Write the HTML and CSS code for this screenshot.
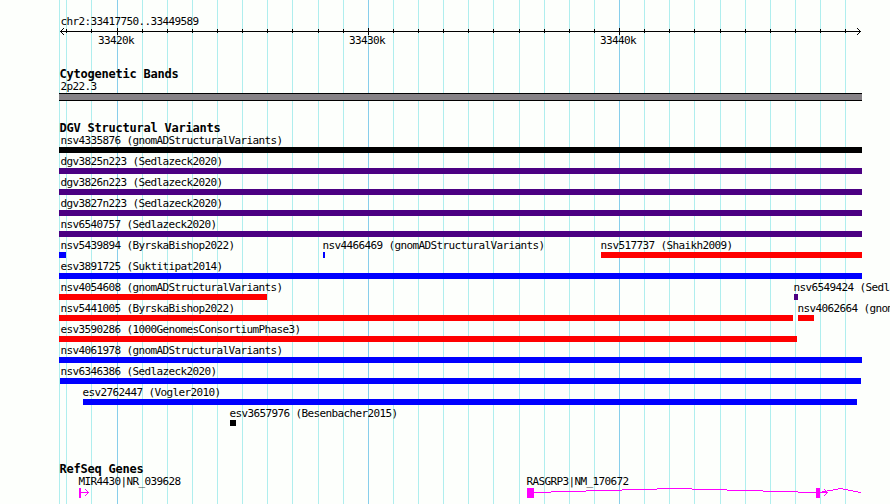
FILE: index.html
```html
<!DOCTYPE html>
<html>
<head>
    <meta charset="UTF-8">
    <meta name="viewport" content="width=device-width, initial-scale=1.0">
    <title>chr2:33417750..33449589</title>

    <link rel="stylesheet" href="styles.css">
</head>

<body>

    <div class="browser">
        <!-- Vertical grid lines, behind all tracks -->
        <svg class="grid" width="890" height="504" shape-rendering="crispEdges">
            <path class="grid-minor" d="M59.5 0V504M66.5 0V504M91.5 0V504M142.5 0V504M167.5 0V504M192.5 0V504M217.5 0V504M242.5 0V504M267.5 0V504M292.5 0V504M318.5 0V504M343.5 0V504M393.5 0V504M418.5 0V504M443.5 0V504M468.5 0V504M493.5 0V504M519.5 0V504M544.5 0V504M569.5 0V504M594.5 0V504M644.5 0V504M669.5 0V504M694.5 0V504M720.5 0V504M745.5 0V504M770.5 0V504M795.5 0V504M820.5 0V504M845.5 0V504"/>
            <path class="grid-major" d="M117.5 0V504M368.5 0V504M619.5 0V504"/>
        </svg>

        <div class="tracks">
            <div class="ruler">
                <div class="label">chr2:33417750..33449589</div>
                <svg class="axis" width="803" height="9" shape-rendering="crispEdges">
                    <path d="M1 4.5H802M7.5 2V6M32.5 2V6M83.5 2V6M108.5 2V6M133.5 2V6M158.5 2V6M183.5 2V6M208.5 2V6M233.5 2V6M259.5 2V6M284.5 2V6M334.5 2V6M359.5 2V6M384.5 2V6M409.5 2V6M434.5 2V6M460.5 2V6M485.5 2V6M510.5 2V6M535.5 2V6M585.5 2V6M610.5 2V6M635.5 2V6M661.5 2V6M686.5 2V6M711.5 2V6M736.5 2V6M761.5 2V6M786.5 2V6"/>
                    <path d="M58.5 1V8M309.5 1V8M560.5 1V8"/>
                    <path d="M2 3.5h1M3 2.5h1M4 1.5h1M2 5.5h1M3 6.5h1M4 7.5h1M800 3.5h1M799 2.5h1M798 1.5h1M800 5.5h1M799 6.5h1M798 7.5h1"/>
                </svg>
                <div class="ticks">
                    <span>33420k</span>
                    <span>33430k</span>
                    <span>33440k</span>
                </div>
            </div>

            <div class="track cytobands">
                <h2>Cytogenetic Bands</h2>
                <div class="label">2p22.3</div>
                <div class="band"></div>
            </div>

            <div class="track variants">
                <h2>DGV Structural Variants</h2>
                <div class="row">
                    <div class="feature clipped" style="--x: 0px; --w: 803px"><div class="label">nsv4335876 (gnomADStructuralVariants)</div><div class="bar black"></div></div>
                </div>
                <div class="row">
                    <div class="feature clipped" style="--x: 0px; --w: 803px"><div class="label">dgv3825n223 (Sedlazeck2020)</div><div class="bar purple"></div></div>
                </div>
                <div class="row">
                    <div class="feature clipped" style="--x: 0px; --w: 803px"><div class="label">dgv3826n223 (Sedlazeck2020)</div><div class="bar purple"></div></div>
                </div>
                <div class="row">
                    <div class="feature clipped" style="--x: 0px; --w: 803px"><div class="label">dgv3827n223 (Sedlazeck2020)</div><div class="bar purple"></div></div>
                </div>
                <div class="row">
                    <div class="feature clipped" style="--x: 0px; --w: 803px"><div class="label">nsv6540757 (Sedlazeck2020)</div><div class="bar purple"></div></div>
                </div>
                <div class="row">
                    <div class="feature clipped" style="--x: 0px; --w: 7px"><div class="label">nsv5439894 (ByrskaBishop2022)</div><div class="bar blue"></div></div>
                    <div class="feature" style="--x: 264px; --w: 2px"><div class="label">nsv4466469 (gnomADStructuralVariants)</div><div class="bar blue"></div></div>
                    <div class="feature" style="--x: 542px; --w: 261px"><div class="label">nsv517737 (Shaikh2009)</div><div class="bar red"></div></div>
                </div>
                <div class="row">
                    <div class="feature clipped" style="--x: 0px; --w: 803px"><div class="label">esv3891725 (Suktitipat2014)</div><div class="bar blue"></div></div>
                </div>
                <div class="row">
                    <div class="feature clipped" style="--x: 0px; --w: 208px"><div class="label">nsv4054608 (gnomADStructuralVariants)</div><div class="bar red"></div></div>
                    <div class="feature" style="--x: 735px; --w: 4px"><div class="label">nsv6549424 (Sedlazeck2020)</div><div class="bar purple"></div></div>
                </div>
                <div class="row">
                    <div class="feature clipped" style="--x: 0px; --w: 734px"><div class="label">nsv5441005 (ByrskaBishop2022)</div><div class="bar red"></div></div>
                    <div class="feature" style="--x: 739px; --w: 16px"><div class="label">nsv4062664 (gnomADStructuralVariants)</div><div class="bar red"></div></div>
                </div>
                <div class="row">
                    <div class="feature clipped" style="--x: 0px; --w: 738px"><div class="label">esv3590286 (1000GenomesConsortiumPhase3)</div><div class="bar red"></div></div>
                </div>
                <div class="row">
                    <div class="feature clipped" style="--x: 0px; --w: 803px"><div class="label">nsv4061978 (gnomADStructuralVariants)</div><div class="bar blue"></div></div>
                </div>
                <div class="row">
                    <div class="feature start" style="--x: 1px; --w: 801px"><div class="label">nsv6346386 (Sedlazeck2020)</div><div class="bar blue"></div></div>
                </div>
                <div class="row">
                    <div class="feature" style="--x: 24px; --w: 774px"><div class="label">esv2762447 (Vogler2010)</div><div class="bar blue"></div></div>
                </div>
                <div class="row">
                    <div class="feature" style="--x: 171px; --w: 6px"><div class="label">esv3657976 (Besenbacher2015)</div><div class="bar black"></div></div>
                </div>
            </div>

            <div class="track genes">
                <h2>RefSeq Genes</h2>
                <div class="row">
                    <div class="feature" style="--x: 20px; --w: 11px">
                        <div class="label">MIR4430|NR_039628</div>
                        <svg class="gene" width="11" height="10" shape-rendering="crispEdges">
                            <path class="exon" d="M0 0h2v10H0z"/>
                            <path d="M2 4.5H10M8 3.5h1M7 2.5h1M6 1.5h1M8 5.5h1M7 6.5h1M6 7.5h1"/>
                        </svg>
                    </div>
                    <div class="feature" style="--x: 468px; --w: 334px">
                        <div class="label">RASGRP3|NM_170672</div>
                        <svg class="gene" width="334" height="10" shape-rendering="crispEdges">
                            <path class="exon" d="M0 0h7v10H0zM289 0h4v10h-4z"/>
                            <path d="M7 4.5H24M24 3.5H59M59 2.5H95M95 1.5H130M130 .5H165M165 1.5H200M200 2.5H236M236 3.5H271M271 4.5H289"/>
                            <path d="M293 4.5H301M295 3.5H300M300 2.5H306M306 1.5H311M311 .5H316M316 1.5H321M321 2.5H326M326 3.5H331M331 4.5H334"/>
                            <path d="M299 3.5h1M298 2.5h1M297 1.5h1M299 5.5h1M298 6.5h1M297 7.5h1"/>
                        </svg>
                    </div>
                </div>
            </div>
        </div>
    </div>

</body>

</html>
```
FILE: styles.css
```css
body {
    margin: 0;
    background-color: #fdfffc;
    color: #000;
    font-family: 'DejaVu Sans Mono', monospace;
    overflow: hidden;
}

.browser {
    display: grid;
    width: 890px;
    height: 504px;
    overflow: hidden;
}

.grid,
.tracks {
    grid-area: 1 / 1;
}

.grid {
    display: block;
}

.grid path {
    fill: none;
}

.grid .grid-minor {
    stroke: #afeeee;
}

.grid .grid-major {
    stroke: #87ceeb;
}

.tracks {
    padding: 15px 0 0 59px;
    width: 803px;
    z-index: 1;
}

.label {
    height: 12px;
    padding-left: 1px;
    font-size: 11px;
    line-height: 14px;
    letter-spacing: -0.622px;
    text-indent: 0.5px;
    white-space: pre;
}

.axis {
    display: block;
}

.axis path {
    stroke: #000;
    fill: none;
}

.ticks {
    display: flex;
    gap: 215px;
    height: 12px;
    padding-left: 39px;
    font-size: 11px;
    line-height: 10px;
    letter-spacing: -0.622px;
}

.ticks span {
    width: 36px;
}

.track h2 {
    margin: 0;
    height: 12px;
    font-size: 12px;
    line-height: 12px;
    font-weight: bold;
    letter-spacing: -0.225px;
    text-indent: 0.5px;
}

.cytobands {
    padding-top: 20px;
}

.band {
    height: 6px;
    margin-top: 1px;
    background-color: #868286;
    border-top: 1px solid #000;
    border-bottom: 1px solid #000;
}

.variants {
    padding-top: 21px;
}

.row {
    display: grid;
    grid-template-columns: 803px;
    height: 21px;
}

.feature {
    grid-area: 1 / 1;
    width: var(--w);
    margin-left: var(--x);
}

.feature .label {
    padding-left: 0;
    margin-left: -1px;
}

.feature.clipped .label {
    margin-left: 1px;
}

.feature.start .label {
    margin-left: 0;
}

.bar {
    height: 6px;
    margin-top: 1px;
}

.black {
    background-color: #000;
}

.purple {
    background-color: #4b0082;
}

.blue {
    background-color: #0000ff;
}

.red {
    background-color: #ff0000;
}

.genes {
    padding-top: 35px;
}

.gene {
    display: block;
    margin-top: 1px;
}

.gene path {
    stroke: #ff00ff;
    fill: none;
}

.gene .exon {
    stroke: none;
    fill: #ff00ff;
}
```
